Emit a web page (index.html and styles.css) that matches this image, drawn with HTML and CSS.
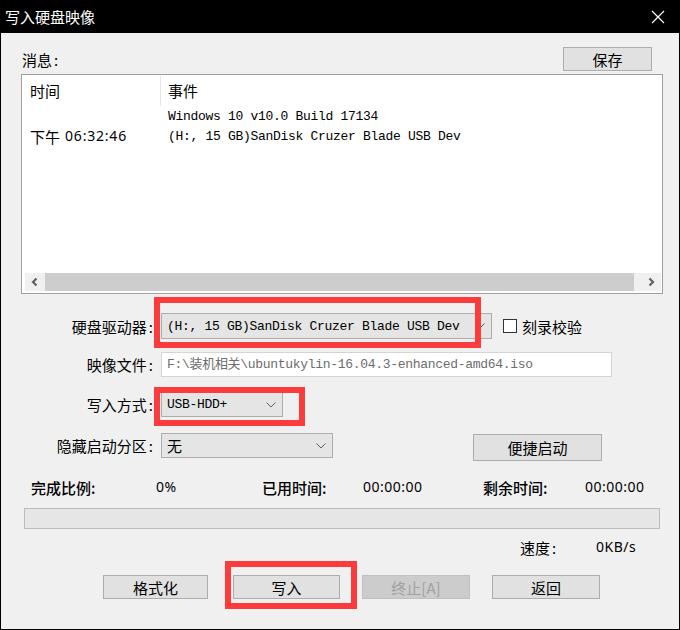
FILE: index.html
```html
<!DOCTYPE html>
<html lang="zh-CN">
<head>
<meta charset="utf-8">
<title>写入硬盘映像</title>
<link rel="stylesheet" href="styles.css">
</head>
<body>
<div class="window">
  <header class="titlebar">
    <span class="title">写入硬盘映像</span>
    <svg class="close" width="14" height="14" viewBox="0 0 14 14"><path d="M1 1L13 13M13 1L1 13" stroke="#fff" stroke-width="1.2" fill="none"/></svg>
  </header>
  <main class="client">
    <div class="msg-head">
      <span class="msg-label">消息<span class="colon">:</span></span>
      <div class="btn btn-save">保存</div>
    </div>
    <div class="listbox">
      <div class="list-content">
        <div class="list-header">
          <div class="col-time">时间</div>
          <div class="col-event">事件</div>
        </div>
        <div class="list-row">
          <div class="col-time"></div>
          <div class="col-event mono">Windows 10 v10.0 Build 17134</div>
        </div>
        <div class="list-row">
          <div class="col-time">下午 <span class="clock">06:32:46</span></div>
          <div class="col-event mono">(H:, 15 GB)SanDisk Cruzer Blade USB Dev</div>
        </div>
      </div>
      <div class="hscroll">
        <span class="sb-btn"><svg width="10" height="10" viewBox="0 0 10 10"><path d="M6.5 1.5L3 5L6.5 8.5" stroke="#606060" stroke-width="2.2" fill="none"/></svg></span>
        <span class="sb-thumb"></span>
        <span class="sb-btn"><svg width="10" height="10" viewBox="0 0 10 10"><path d="M3.5 1.5L7 5L3.5 8.5" stroke="#606060" stroke-width="2.2" fill="none"/></svg></span>
      </div>
    </div>

    <div class="form">
      <div class="row row-drive">
        <span class="field-label">硬盘驱动器<span class="colon">:</span></span>
        <div class="combo combo-drive">
          <span class="combo-text mono">(H:, 15 GB)SanDisk Cruzer Blade USB Dev</span>
          <svg class="chev" width="10" height="6" viewBox="0 0 10 6"><path d="M0.5 0.5L5 5L9.5 0.5" stroke="#606060" stroke-width="1" fill="none"/></svg>
        </div>
        <span class="checkbox"></span>
        <span class="check-label">刻录校验</span>
      </div>
      <div class="row row-file">
        <span class="field-label">映像文件<span class="colon">:</span></span>
        <div class="textbox mono">F:\装机相关\ubuntukylin-16.04.3-enhanced-amd64.iso</div>
      </div>
      <div class="row row-mode">
        <span class="field-label">写入方式<span class="colon">:</span></span>
        <div class="combo combo-mode">
          <span class="combo-text mono">USB-HDD+</span>
          <svg class="chev" width="10" height="6" viewBox="0 0 10 6"><path d="M0.5 0.5L5 5L9.5 0.5" stroke="#606060" stroke-width="1" fill="none"/></svg>
        </div>
      </div>
      <div class="row row-hidden">
        <span class="field-label">隐藏启动分区<span class="colon">:</span></span>
        <div class="combo combo-hidden">
          <span class="combo-text">无</span>
          <svg class="chev" width="10" height="6" viewBox="0 0 10 6"><path d="M0.5 0.5L5 5L9.5 0.5" stroke="#606060" stroke-width="1" fill="none"/></svg>
        </div>
        <div class="btn btn-quick">便捷启动</div>
      </div>
    </div>

    <div class="stats">
      <span class="stat-label s1">完成比例:</span>
      <span class="stat-value s2">0%</span>
      <span class="stat-label s3">已用时间:</span>
      <span class="stat-value s4">00:00:00</span>
      <span class="stat-label s5">剩余时间:</span>
      <span class="stat-value">00:00:00</span>
    </div>

    <div class="progress"></div>

    <div class="speed">
      <span class="speed-label">速度<span class="colon">:</span></span>
      <span class="stat-value">0KB/s</span>
    </div>

    <div class="actions">
      <div class="btn btn-act btn-format">格式化</div>
      <div class="btn btn-act btn-write">写入</div>
      <div class="btn btn-act btn-disabled">终止[A]</div>
      <div class="btn btn-act">返回</div>
    </div>
  </main>

  <div class="mark mark-drive"></div>
  <div class="mark mark-mode"></div>
  <div class="mark mark-write"></div>
</div>
</body>
</html>
```

FILE: styles.css
```css
* { box-sizing: border-box; margin: 0; padding: 0; }
html, body { width: 680px; height: 630px; overflow: hidden; background: #000; }
body {
  font-family: "Noto Sans CJK SC", "Noto Sans", sans-serif;
  font-size: 15px;
  color: #000;
  line-height: 1;
}
.window {
  position: relative;
  width: 680px;
  height: 630px;
  border: 1px solid #000;
  border-top: 0;
  background: #f0f0f0;
  display: flex;
  flex-direction: column;
}
.titlebar {
  height: 33px;
  flex-shrink: 0;
  background: #000;
  color: #fff;
  display: flex;
  align-items: center;
  justify-content: space-between;
  padding: 0 14px 0 4px;
}
.title { font-size: 15px; }
.close { display: block; }

.client {
  flex: 1;
  padding: 0 16px 0 20px;
  display: flex;
  flex-direction: column;
}
.msg-head {
  padding-top: 14px;
  display: flex;
  align-items: center;
  justify-content: space-between;
}
.msg-label { margin-left: 1px; }
.colon { margin-left: 2px; }

.btn {
  display: flex;
  align-items: center;
  justify-content: center;
  background: #e1e1e1;
  border: 1px solid #adadad;
  font-size: 15px;
}
.btn-save { width: 89px; height: 24px; margin-right: 11px; }

.listbox {
  margin-top: 3px;
  height: 220px;
  background: #fff;
  border: 1px solid #a0a0a0;
  display: flex;
  flex-direction: column;
}
.list-content { flex: 1; }
.list-header { height: 31px; display: flex; align-items: center; }
.list-header .col-time { border-right: 1px solid #e5e5e5; height: 30px; }
.list-row { height: 20px; display: flex; align-items: center; }
.col-time {
  width: 139px;
  padding-left: 8px;
  display: flex;
  align-items: center;
  flex-shrink: 0;
}
.col-event { padding-left: 7px; }
.clock { margin-left: 5px; letter-spacing: 0.8px; font-family: "Noto Sans", sans-serif; font-size: 14px; }
.mono {
  font-family: "Liberation Mono", "Noto Sans CJK SC", monospace;
  font-size: 13px;
  letter-spacing: -0.3px;
}
.hscroll {
  height: 18px;
  margin: 0 1px 2px 3px;
  background: #f0f0f0;
  display: flex;
  align-items: stretch;
}
.sb-btn { width: 20px; display: flex; align-items: center; justify-content: center; flex-shrink: 0; }
.sb-thumb { flex: 1; background: #cdcdcd; margin-right: 7px; }

.form { margin-top: 19px; display: flex; flex-direction: column; }
.row { display: flex; align-items: center; }
.row-drive { height: 26px; }
.row-file { height: 25px; margin-top: 13px; }
.row-mode { height: 25px; margin-top: 15px; }
.row-hidden { height: 28px; margin-top: 16px; align-items: flex-start; }
.field-label {
  width: 140px;
  text-align: right;
  padding-right: 8px;
  flex-shrink: 0;
}
.row-hidden .field-label { line-height: 25px; }

.combo {
  height: 100%;
  background: #e5e5e5;
  border: 1px solid #adadad;
  display: flex;
  align-items: center;
  justify-content: space-between;
  padding: 0 6px 0 5px;
}
.combo-drive { width: 331px; height: 26px; }
.combo-mode { width: 122px; height: 25px; }
.combo-hidden { width: 172px; height: 25px; }
.chev { display: block; flex-shrink: 0; }

.checkbox {
  width: 14px;
  height: 14px;
  margin-left: 11px;
  background: #fff;
  border: 1px solid #333;
}
.check-label { margin-left: 5px; }

.textbox {
  width: 451px;
  height: 25px;
  background: #fff;
  border: 1px solid #d4d4d4;
  color: #6d6d6d;
  display: flex;
  align-items: center;
  padding-left: 5px;
}

.btn-quick { width: 129px; height: 27px; margin-left: 140px; margin-top: 1px; }

.stats {
  margin-top: 16px;
  height: 20px;
  display: flex;
  align-items: center;
  padding-left: 10px;
}
.stat-label { font-weight: 500; flex-shrink: 0; }
.stat-value { font-family: "Noto Sans", sans-serif; font-size: 14px; letter-spacing: 0.5px; flex-shrink: 0; }
.s1 { width: 125px; }
.s2 { width: 106px; }
.s3 { width: 101px; }
.s4 { width: 120px; }
.s5 { width: 102px; }

.progress {
  margin: 11px 0 0 3px;
  width: 636px;
  height: 21px;
  background: #e6e6e6;
  border: 1px solid #bcbcbc;
}

.speed {
  margin-top: 9px;
  height: 18px;
  display: flex;
  align-items: center;
  padding-left: 499px;
}
.speed-label { width: 76px; }

.actions {
  margin-top: 19px;
  display: flex;
  gap: 22px;
  padding-left: 82px;
}
.btn-act { width: 108px; height: 24px; }
.btn-format { width: 105px; margin-right: 3px; }
.btn-write { width: 107px; }
.btn-disabled { background: #cccccc; border-color: #bfbfbf; color: #a0a0a0; }

.mark {
  position: absolute;
  border: 6px solid #fc3c3c;
}
.mark-drive { left: 153px; top: 297px; width: 327px; height: 51px; }
.mark-mode { left: 153px; top: 387px; width: 151px; height: 39px; }
.mark-write { left: 224px; top: 561px; width: 132px; height: 48px; }
```
